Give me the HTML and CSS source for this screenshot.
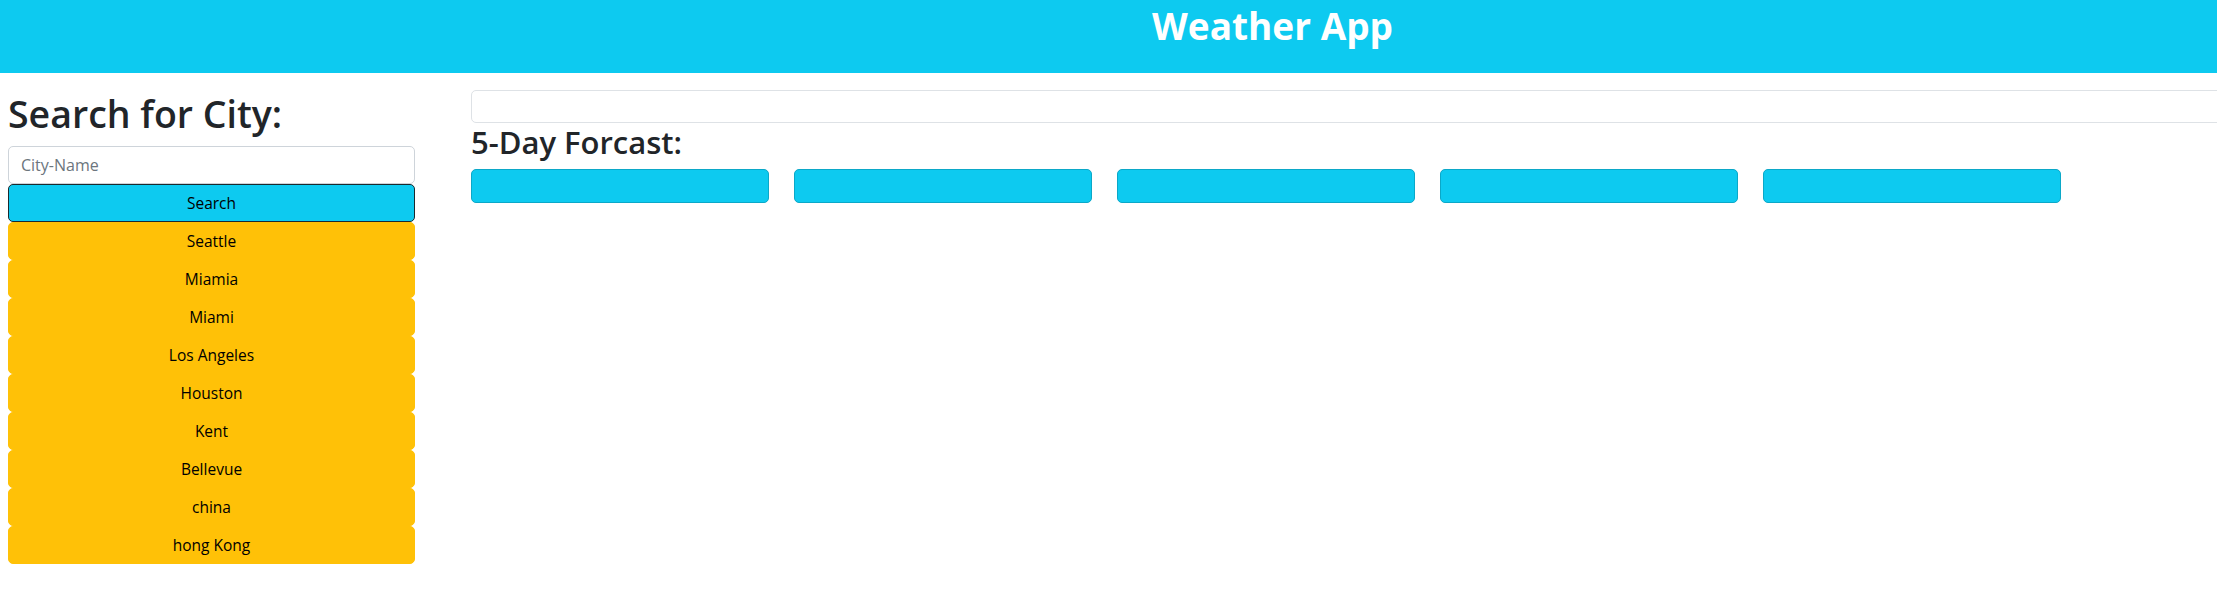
FILE: index.html
```html
<!DOCTYPE html>
<html lang="en">
<head>
<meta charset="utf-8">
<title>Weather App</title>
<link rel="stylesheet" href="styles.css">
</head>
<body>
<header class="app-header">
  <h1 class="app-title">Weather App</h1>
</header>
<main class="layout">
  <section class="sidebar">
    <h1 class="search-title">Search for City:</h1>
    <input class="city-input" type="text" placeholder="City-Name">
    <button class="btn btn-search" type="button">Search</button>
    <div class="history">
      <button class="btn btn-city" type="button">Seattle</button>
      <button class="btn btn-city" type="button">Miamia</button>
      <button class="btn btn-city" type="button">Miami</button>
      <button class="btn btn-city" type="button">Los Angeles</button>
      <button class="btn btn-city" type="button">Houston</button>
      <button class="btn btn-city" type="button">Kent</button>
      <button class="btn btn-city" type="button">Bellevue</button>
      <button class="btn btn-city" type="button">china</button>
      <button class="btn btn-city" type="button">hong Kong</button>
    </div>
  </section>
  <section class="content">
    <div class="current"></div>
    <h2 class="forecast-title">5-Day Forcast:</h2>
    <div class="forecast">
      <div class="day-card"></div>
      <div class="day-card"></div>
      <div class="day-card"></div>
      <div class="day-card"></div>
      <div class="day-card"></div>
    </div>
  </section>
</main>
</body>
</html>
```
FILE: styles.css
```css
* { box-sizing: border-box; }
html, body { margin: 0; padding: 0; overflow: hidden; }
body {
  font-family: "Open Sans", "Noto Sans", sans-serif;
  color: #212529;
  background: #fff;
  font-size: 16px;
  line-height: 1.5;
}
.app-header {
  background: #0dcaf0;
  height: 73px;
  padding-left: 328px;
  text-align: center;
}
.app-title {
  margin: 0;
  padding-top: 2px;
  font-size: 37px;
  line-height: 48px;
  font-weight: 700;
  color: #fff;
}
.layout {
  display: flex;
  padding: 17px 0 0 8px;
  gap: 56px;
}
.sidebar {
  width: 407px;
  flex: none;
  display: flex;
  flex-direction: column;
}
.search-title {
  margin: 0 0 8px;
  font-size: 37.5px;
  line-height: 48px;
  font-weight: 600;
}
.city-input {
  height: 38px;
  border: 1px solid #ced4da;
  border-radius: 5px;
  padding: 6px 12px;
  font: inherit;
  color: #212529;
}
.city-input::placeholder { color: #6c757d; }
.btn {
  display: block;
  width: 100%;
  height: 38px;
  padding: 6px 12px;
  font: inherit;
  font-size: 15.5px;
  line-height: 24px;
  text-align: center;
  color: #000;
  border-radius: 5px;
  cursor: pointer;
}
.btn-search {
  background: #0dcaf0;
  border: 1px solid #1b2a2e;
}
.history { display: flex; flex-direction: column; }
.btn-city {
  background: #ffc107;
  border: 1px solid #ffc107;
}
.content {
  flex: 1;
  min-width: 0;
  margin-right: -40px;
}
.current {
  height: 33px;
  border: 1px solid #dee2e6;
  border-radius: 5px;
}
.forecast-title {
  margin: 0 0 8px;
  font-size: 31px;
  line-height: 38px;
  font-weight: 600;
}
.forecast {
  display: flex;
  gap: 25px;
}
.day-card {
  width: 298px;
  height: 34px;
  background: #0dcaf0;
  border: 1px solid #0ba8c8;
  border-radius: 5px;
}
```
